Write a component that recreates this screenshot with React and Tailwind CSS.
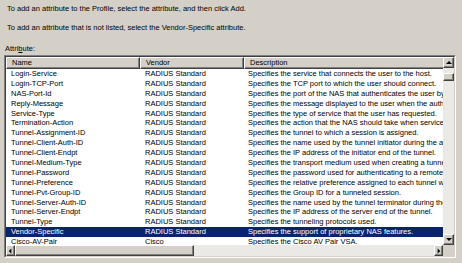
import React from "react";

const rows = [
  ["Login-Service", "RADIUS Standard", "Specifies the service that connects the user to the host."],
  ["Login-TCP-Port", "RADIUS Standard", "Specifies the TCP port to which the user should connect."],
  ["NAS-Port-Id", "RADIUS Standard", "Specifies the port of the NAS that authenticates the user by using a port identification string."],
  ["Reply-Message", "RADIUS Standard", "Specifies the message displayed to the user when the authentication request is accepted or rejected."],
  ["Service-Type", "RADIUS Standard", "Specifies the type of service that the user has requested."],
  ["Termination-Action", "RADIUS Standard", "Specifies the action that the NAS should take when service is completed."],
  ["Tunnel-Assignment-ID", "RADIUS Standard", "Specifies the tunnel to which a session is assigned."],
  ["Tunnel-Client-Auth-ID", "RADIUS Standard", "Specifies the name used by the tunnel initiator during the authentication phase of tunnel establishment."],
  ["Tunnel-Client-Endpt", "RADIUS Standard", "Specifies the IP address of the initiator end of the tunnel."],
  ["Tunnel-Medium-Type", "RADIUS Standard", "Specifies the transport medium used when creating a tunnel for protocols that can operate over multiple transports."],
  ["Tunnel-Password", "RADIUS Standard", "Specifies the password used for authenticating to a remote server."],
  ["Tunnel-Preference", "RADIUS Standard", "Specifies the relative preference assigned to each tunnel when more than one tunnel is available."],
  ["Tunnel-Pvt-Group-ID", "RADIUS Standard", "Specifies the Group ID for a tunneled session."],
  ["Tunnel-Server-Auth-ID", "RADIUS Standard", "Specifies the name used by the tunnel terminator during the authentication phase of tunnel establishment."],
  ["Tunnel-Server-Endpt", "RADIUS Standard", "Specifies the IP address of the server end of the tunnel."],
  ["Tunnel-Type", "RADIUS Standard", "Specifies the tunneling protocols used."],
  ["Vendor-Specific", "RADIUS Standard", "Specifies the support of proprietary NAS features."],
  ["Cisco-AV-Pair", "Cisco", "Specifies the Cisco AV Pair VSA."],
];

// classic raised 3d button edge
const raised =
  "border border-t-white border-l-white border-r-[#404040] border-b-[#404040] shadow-[inset_-1px_-1px_0_#808080]";

function Arrow({ dir }) {
  const pts = {
    up: "1,5 4,2 7,5",
    down: "1,2 4,5 7,2",
    left: "5,1 2,4 5,7",
    right: "3,1 6,4 3,7",
  }[dir];
  return (
    <svg width="8" height="8" viewBox="0 0 8 8">
      <polygon points={pts} fill="#000" />
    </svg>
  );
}

function HeaderCell({ children, className }) {
  return (
    <div className={`${raised} h-[12px] bg-[#d4d0c8] flex items-center pl-[5px] shrink-0 ${className}`}>
      {children}
    </div>
  );
}

export default function App() {
  return (
    <div className="w-[462px] h-[263px] overflow-hidden bg-[#d4d0c8] text-black text-[7.5px] leading-[10px] font-['Liberation_Sans',Arial,sans-serif]">
      <div className="pl-[7px] pt-[4px]">
        To add an attribute to the Profile, select the attribute, and then click Add.
      </div>
      <div className="pl-[7px] mt-[9px]">
        To add an attribute that is not listed, select the Vendor-Specific attribute.
      </div>
      <div className="pl-[5px] mt-[11px] h-[11px]">
        Attri<span className="underline">b</span>ute:
      </div>

      {/* list view, sunken frame */}
      <div className="ml-[4px] w-[452px] h-[203px] border border-t-[#808080] border-l-[#808080] border-r-white border-b-white">
        <div className="w-full h-full border border-t-[#404040] border-l-[#404040] border-r-[#d4d0c8] border-b-[#d4d0c8] bg-white flex flex-col">
          <div className="flex h-[188px]">
            <div className="w-[437px] overflow-hidden">
              <div className="flex">
                <HeaderCell className="w-[134px]">Name</HeaderCell>
                <HeaderCell className="w-[104px]">Vendor</HeaderCell>
                <HeaderCell className="w-[260px] pl-[4px]">Description</HeaderCell>
              </div>
              {rows.map(([name, vendor, desc]) => {
                const sel = name === "Vendor-Specific";
                return (
                  <div
                    key={name}
                    className={`flex h-[9.9px] items-center whitespace-nowrap ${
                      sel ? "bg-[#0a246a] text-white" : ""
                    }`}
                  >
                    <div className="w-[134px] pl-[5px] shrink-0 overflow-hidden">{name}</div>
                    <div className="w-[104px] pl-[5px] shrink-0 overflow-hidden">{vendor}</div>
                    <div className="pl-[4px] shrink-0">{desc}</div>
                  </div>
                );
              })}
            </div>
            {/* vertical scrollbar */}
            <div className="w-[11px] flex flex-col bg-[#ebe9e5]">
              <div className={`${raised} h-[11px] bg-[#d4d0c8] flex items-center justify-center`}>
                <Arrow dir="up" />
              </div>
              <div className="flex-1 pt-[5px]">
                <div className={`${raised} h-[8px] bg-[#d4d0c8]`} />
              </div>
              <div className={`${raised} h-[11px] bg-[#d4d0c8] flex items-center justify-center`}>
                <Arrow dir="down" />
              </div>
            </div>
          </div>
          {/* horizontal scrollbar */}
          <div className="flex h-[11px]">
            <div className="w-[437px] flex bg-[#ebe9e5]">
              <div className={`${raised} w-[9px] bg-[#d4d0c8] flex items-center justify-center`}>
                <Arrow dir="left" />
              </div>
              <div className={`${raised} w-[179px] bg-[#d4d0c8]`} />
              <div className="flex-1" />
              <div className={`${raised} w-[9px] bg-[#d4d0c8] flex items-center justify-center`}>
                <Arrow dir="right" />
              </div>
            </div>
            <div className="w-[11px] bg-[#d4d0c8]" />
          </div>
        </div>
      </div>
    </div>
  );
}
